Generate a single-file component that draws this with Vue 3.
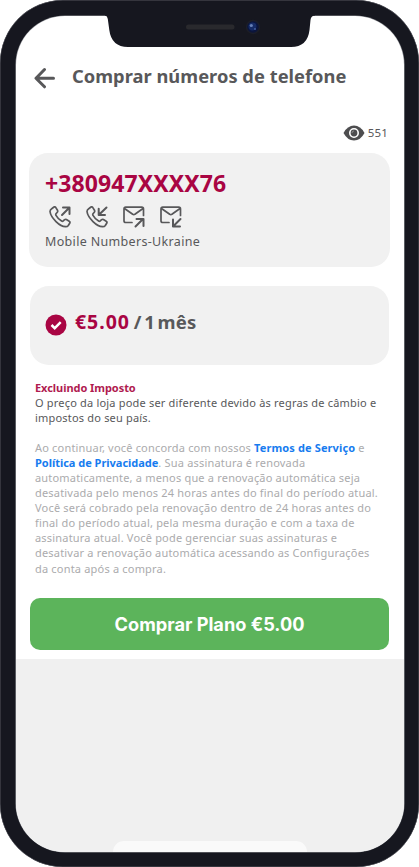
<script setup>
const icons = [
  { name: 'Outgoing call', call: true, arrow: 'M13 9 20.500 1.500M14 1.500h6.500V8' },
  { name: 'Incoming call', call: true, arrow: 'M20.500 1.500 12.700 9M12.700 2.800V9H19' },
  { name: 'Outgoing message', call: false, arrow: 'M12.500 20.500 20 13M13.500 13h7v7' },
  { name: 'Incoming message', call: false, arrow: 'M20.500 13 13 20.500M13 13.500v7h7' },
]
const terms = [
  'automaticamente, a menos que a renovação automática seja',
  'desativada pelo menos 24 horas antes do final do período atual.',
  'Você será cobrado pela renovação dentro de 24 horas antes do',
  'final do período atual, pela mesma duração e com a taxa de',
  'assinatura atual. Você pode gerenciar suas assinaturas e',
  'desativar a renovação automática acessando as Configurações',
  'da conta após a compra.',
]
</script>

<template>
  <div class="phone">
    <svg class="notch" viewBox="0 0 210 34" aria-hidden="true">
      <path d="M-1 0V.500Q2.300 .500 2.800 4L4.300 15Q6.500 32 23 32H186Q202.500 32 204.500 15L205.500 5Q206 .500 210 .500V0Z" fill="#16171f" />
      <rect x="81" y="9.500" width="48.500" height="5" rx="2.500" fill="#29292d" />
      <circle cx="148" cy="12" r="7.200" fill="#1c1e28" />
      <circle cx="148" cy="12" r="5.800" fill="#0b153c" />
      <circle cx="147.500" cy="11.500" r="4" fill="#152b67" />
      <circle cx="146.300" cy="10.500" r="1.600" fill="#6680b8" />
      <circle cx="150" cy="14" r=".9" fill="#4864a5" />
    </svg>
    <main class="screen">
      <header class="header">
        <svg class="back" viewBox="0 0 22 22"><path d="M10.500 2.500 2 11.300l8.500 8.500M2.500 11.300H19.500" /></svg>
        <h1>Comprar números de telefone</h1>
      </header>
      <div class="views">
        <svg class="eye" viewBox="0 0 22 16">
          <path d="M.5 8Q4.500.5 11 .5T21.500 8Q17.500 15.500 11 15.500T.5 8Z" fill="#4d4d4f" />
          <circle cx="11" cy="8" r="4.200" fill="#4d4d4f" stroke="#fff" stroke-width="1.600" />
          <path d="M9 8a2 2 0 0 1 2-2" fill="none" stroke="#999" stroke-width=".8" />
        </svg>
        <span>551</span>
      </div>
      <section class="card number-card">
        <h2>+380947XXXX76</h2>
        <div class="icons">
          <svg v-for="icon in icons" :key="icon.name" viewBox="0 0 22 22" role="img" :aria-label="icon.name">
            <path v-if="icon.call" d="M3 2.500 5 1Q6 .5 6.800 1.600L8.500 4.300Q9 5.300 8.300 6.200L7 7.700Q6.500 8.500 7 9.400 9 13 12.600 15.100 13.500 15.600 14.300 14.800L15.600 13.600Q16.500 13 17.400 13.500L20.200 15.200Q21.400 16 20.700 17.200L19.300 19.500Q18.400 20.800 16.500 20.700 12 20.500 7 15.600 1.500 10 1 5.500 1 3.800 3 2.500Z" />
            <path v-else d="M9 16.500H2.800Q1 16.500 1 14.700V3Q1 1.200 2.800 1.200H18.700Q20.500 1.200 20.500 3V9.500M1.500 2.500 9.700 8.300Q10.800 9 11.900 8.300L20 2.500" />
            <path class="arrow" :d="icon.arrow" />
          </svg>
        </div>
        <p>Mobile Numbers-Ukraine</p>
      </section>
      <section class="card plan-card">
        <svg class="check" viewBox="0 0 22 22"><circle cx="11" cy="11" r="10.500" /><path d="m6.500 11 3.200 3.200 6-6" /></svg>
        <strong class="price">€5.00</strong>
        <strong class="period">/ 1 mês</strong>
      </section>
      <section class="copy">
        <strong class="tax">Excluindo Imposto</strong>
        <p class="notice">O preço da loja pode ser diferente devido às regras de câmbio e<br />impostos do seu país.</p>
        <p class="terms">
          <span class="line">Ao continuar, você concorda com nossos <a>Termos de Serviço</a> e</span>
          <span class="line"><a class="privacy">Política de Privacidade</a>. Sua assinatura é renovada</span>
          <span v-for="line in terms" :key="line" class="line">{{ line }}</span>
        </p>
      </section>
      <button class="buy">Comprar Plano €5.00</button>
      <footer class="bottom"><div class="home"></div></footer>
    </main>
  </div>
</template>

<style>
body { background: #fff; overflow: hidden; }
</style>

<style scoped>
* { box-sizing: border-box; }
h1, h2, p { margin: 0; }
.phone { position: relative; width: 419px; height: 867px; padding: 15.500px 15.500px 15.500px 16px; border-radius: 63px; background: #16171f; box-shadow: inset 0 0 0 .5px #54555d; font-family: "Noto Sans", sans-serif; color: #58585a; }
.notch { position: absolute; left: 105px; top: 15px; width: 210px; height: 34px; }
.screen { display: flex; flex-direction: column; width: 388px; height: 836px; overflow: hidden; border-radius: 49px; background: #fff; box-shadow: 0 0 0 .6px #898b90; }
.header { display: flex; flex: none; align-items: center; height: 30px; margin-top: 45px; padding-left: 18px; }
.back { width: 22px; height: 22px; margin: 5px 16px 0 0; fill: none; stroke: #58585a; stroke-width: 3; stroke-linecap: round; stroke-linejoin: round; }
h1 { font-size: 18.300px; line-height: 28px; font-weight: 700; letter-spacing: .03px; white-space: nowrap; }
.views { display: flex; flex: none; align-items: center; justify-content: flex-end; height: 20px; margin-top: 32px; padding-right: 16px; font-size: 11.500px; }
.views span { letter-spacing: .15px; }
.eye { width: 22px; height: 16px; margin-right: 3px; }
.card { flex: none; border-radius: 19px; background: #f1f1f1; }
.number-card { width: 361px; height: 114px; margin: 10.500px 0 0 13px; padding: 15px 16px; }
h2 { color: #a90543; font-size: 23px; line-height: 30px; font-weight: 700; letter-spacing: .1px; }
.icons { display: flex; gap: 15px; height: 22px; margin: 8px 0 0 4px; }
.icons svg { width: 22px; height: 22px; fill: none; stroke: #58585a; stroke-width: 1.700; stroke-linecap: round; stroke-linejoin: round; }
.icons .arrow { stroke-width: 2; }
.number-card p { margin-top: 4px; font-size: 12.500px; line-height: 20px; letter-spacing: .33px; white-space: nowrap; }
.plan-card { display: flex; width: 359px; height: 79px; margin: 19px 0 0 14px; padding: 24px 16px; font-size: 19.500px; line-height: 24px; white-space: nowrap; }
.check { width: 22px; height: 22px; margin: 4px 8px 0 -1px; fill: #a90543; }
.check path { fill: none; stroke: #fff; stroke-width: 2.500; }
.price { margin-right: 4px; color: #a90543; letter-spacing: .95px; }
.period { font-size: 18.500px; letter-spacing: .2px; word-spacing: -2.500px; }
.copy { flex: none; height: 195px; margin: 14.500px 0 0 19px; font-size: 11px; line-height: 15.100px; white-space: nowrap; }
.tax { display: block; color: #b01b50; letter-spacing: -.05px; }
.notice { letter-spacing: .19px; }
.terms { margin-top: 15px; color: #ababad; letter-spacing: .19px; }
.line { display: block; }
a { color: #177cef; font-weight: 700; letter-spacing: .12px; }
.privacy { letter-spacing: -.02px; }
.buy { flex: none; width: 359px; height: 52px; margin: 23px 0 0 14px; padding: 0; border: 0; border-radius: 10px; background: #5cb45b; color: #fff; font: 700 18.200px/52px Inter, sans-serif; }
.bottom { display: flex; flex: 1; align-items: flex-end; justify-content: center; margin-top: 9px; background: #f0f0f0; }
.home { width: 194px; height: 11px; border-radius: 16px 16px 0 0; background: #fafafa; }
</style>
